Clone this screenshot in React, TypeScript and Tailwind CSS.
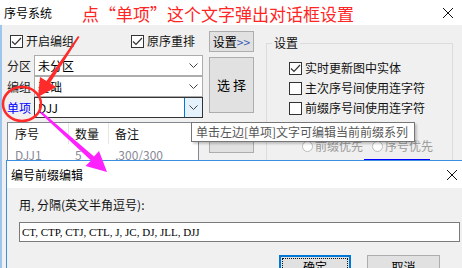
import React from 'react';

const ui = { fontFamily: '"Noto Sans CJK SC", "Microsoft YaHei", sans-serif' };

function Check({ checked }: { checked?: boolean }) {
  return (
    <span className="w-[13px] h-[13px] border border-[#333] bg-white flex items-center justify-center shrink-0">
      {checked && (
        <svg width="11" height="9" viewBox="0 0 11 9">
          <path d="M1 4.5 L4 7.5 L10 1" fill="none" stroke="#333" strokeWidth="1.2" />
        </svg>
      )}
    </span>
  );
}

function Chevron() {
  return (
    <svg width="9" height="5" viewBox="0 0 9 5">
      <path d="M0.5 0.5 L4.5 4.5 L8.5 0.5" fill="none" stroke="#444" strokeWidth="1" />
    </svg>
  );
}

function Combo({ label, value, focused, blue }: { label: string; value: string; focused?: boolean; blue?: boolean }) {
  return (
    <div className="flex items-center h-[21px]">
      <span className={`w-[27px] text-[12px] leading-none ${blue ? 'text-[#0000ff]' : 'text-[#222]'}`}>{label}</span>
      <div className={`flex-1 h-[21px] bg-white border flex items-center ${focused ? 'border-[#333]' : 'border-[#acacac]'}`}>
        <span className="flex-1 pl-[3px] text-[12px] text-black leading-none">{value}</span>
        <span className={`w-[18px] h-full flex items-center justify-center ${focused ? 'bg-[#e5f1fb] border-l border-[#0078d7]' : ''}`}>
          <Chevron />
        </span>
      </div>
    </div>
  );
}

export default function App() {
  return (
    <div className="relative w-[462px] h-[268px] overflow-hidden bg-white" style={ui}>
      {/* 主窗口标题 */}
      <div className="h-[25px] bg-white flex items-center justify-between pl-[4px] pr-[8px]">
        <span className="text-[12px] text-black">序号系统</span>
        <svg width="12" height="12" viewBox="0 0 12 12">
          <path d="M1 1 L11 11 M11 1 L1 11" stroke="#111" strokeWidth="1" />
        </svg>
      </div>

      {/* 主窗口主体 */}
      <div className="h-[243px] bg-[#f0f0f0] border-l-2 border-[#9cc6ee] flex pl-[5px] pt-[6px]">
        {/* 左列 */}
        <div className="w-[196px] flex flex-col">
          <div className="flex items-center h-[16px] mt-[2px] pl-[3px] text-[12px] text-[#111]">
            <Check checked />
            <span className="ml-[3px]">开启编组</span>
            <span className="ml-[57px]"><Check checked /></span>
            <span className="ml-[3px]">原序重排</span>
          </div>
          <div className="mt-[6px] flex flex-col">
            <Combo label="分区" value="未分区" />
            <Combo label="编组" value="基础" />
            <Combo label="单项" value="DJJ" focused blue />
          </div>
          <div className="mt-[4px] w-[192px] h-[50px] bg-white border border-[#828790]">
            <div className="flex h-[21px] text-[12px] text-[#111] items-center">
              <span className="w-[61px] pl-[7px] h-full flex items-center border-r border-[#e5e5e5]">序号</span>
              <span className="w-[40px] pl-[6px] h-full flex items-center border-r border-[#e5e5e5]">数量</span>
              <span className="pl-[6px]">备注</span>
            </div>
            <div className="flex text-[12px] leading-[16px] text-[#8a8a96] mt-[3px]">
              <span className="w-[61px] pl-[7px]">DJJ1</span>
              <span className="w-[40px] pl-[6px]">5</span>
              <span className="pl-[6px]">,300/300</span>
            </div>
          </div>
        </div>

        {/* 按钮列 */}
        <div className="w-[45px] ml-[6px] flex flex-col">
          <div className="h-[21px] border border-[#adadad] bg-[#e1e1e1] flex items-center justify-center text-[12px] text-black">
            设置<span className="text-[#3c5fb4]">&gt;&gt;</span>
          </div>
          <div className="mt-[5px] h-[56px] border border-[#adadad] bg-[#e1e1e1] flex items-center justify-center text-[13px] text-black">
            选 择
          </div>
          <div className="mt-[9px] h-[31px] border border-[#adadad] bg-[#e1e1e1]" />
        </div>

        {/* 设置分组 */}
        <div className="relative ml-[12px] mt-[12px] w-[187px] h-[140px] border border-[#dcdcdc]">
          <span className="absolute -top-[8px] left-[5px] px-[2px] bg-[#f0f0f0] text-[12px] text-[#111] leading-[14px]">设置</span>
          <div className="flex flex-col pl-[22px] pt-[17px] gap-[6px] text-[12px] text-[#111]">
            <div className="flex items-center h-[14px] gap-[3px]"><Check checked />实时更新图中实体</div>
            <div className="flex items-center h-[14px] gap-[3px]"><Check />主次序号间使用连字符</div>
            <div className="flex items-center h-[14px] gap-[3px]"><Check />前缀序号间使用连字符</div>
            <div className="flex items-center h-[14px] gap-[3px]"><Check />前缀排序优先级</div>
            <div className="flex items-center h-[14px] -mt-[2px] pl-[13px] text-[#9a9a9a]">
              <span className="w-[11px] h-[11px] rounded-full border border-[#bcbcbc] bg-white mr-[2px]" />
              前缀优先
              <span className="w-[11px] h-[11px] rounded-full border border-[#bcbcbc] bg-white ml-[9px] mr-[2px]" />
              序号优先
            </div>
          </div>
          <div className="absolute left-[97px] top-[115px] w-[66px] h-[2px] bg-[#0000ff]" />
        </div>
      </div>

      {/* 红色说明 */}
      <div className="absolute left-[82px] top-[3px] text-[17px] leading-[22px] text-[#ff2525]">
        点“单项”这个文字弹出对话框设置
      </div>

      {/* 提示框 */}
      <div className="absolute left-[191px] top-[122px] w-[224px] h-[20px] bg-white border border-[#767676] shadow-[2px_2px_2px_rgba(0,0,0,0.2)] flex items-center pl-[4px] text-[12px] text-[#575757]">
        单击左边[单项]文字可编辑当前前缀系列
      </div>

      {/* 对话框 */}
      <div className="absolute left-[6px] top-[160px] w-[460px] h-[110px] border-t border-l border-[#3d8fe0] bg-[#f0f0f0]">
        <div className="h-[27px] bg-white flex items-center justify-between pl-[4px] pr-[8px]">
          <span className="text-[12px] text-black">编号前缀编辑</span>
          <svg width="12" height="12" viewBox="0 0 12 12">
            <path d="M1 1 L11 11 M11 1 L1 11" stroke="#111" strokeWidth="1" />
          </svg>
        </div>
        <div className="pl-[12px] pt-[10px]">
          <div className="text-[12px] text-[#111] leading-[14px]">用, 分隔(英文半角逗号):</div>
          <div className="mt-[10px] w-[441px] h-[20px] bg-white border border-[#7a7a7a] flex items-center pl-[2px] text-[11px] text-black" style={{ fontFamily: '"Liberation Serif", serif' }}>
            CT, CTP, CTJ, CTL, J, JC, DJ, JLL, DJJ
          </div>
          <div className="mt-[13px] flex pl-[260px] gap-[16px]">
            <div className="w-[72px] h-[24px] border-2 border-[#0078d7] bg-[#e1e1e1] p-[1px]">
              <div className="w-full h-full border border-dotted border-[#111] flex items-center justify-center text-[12px] text-black">确定</div>
            </div>
            <div className="w-[73px] h-[24px] border border-[#adadad] bg-[#e1e1e1] flex items-center justify-center text-[12px] text-black">取消</div>
          </div>
        </div>
      </div>

      {/* 标注 */}
      <svg className="absolute left-0 top-0 pointer-events-none" width="462" height="268">
        <ellipse cx="22" cy="104" rx="19" ry="17" fill="none" stroke="#ff2a2a" strokeWidth="2.5" />
        <polygon points="78,36 79.5,37 50,83 56,87 38,97 40,77 46.5,81" fill="#ff2a2a" />
        <polygon points="40,113 41.5,111.5 94,156.5 99,151 107,172 85.5,166 91,160.5" fill="#ff22ff" />
      </svg>
    </div>
  );
}
